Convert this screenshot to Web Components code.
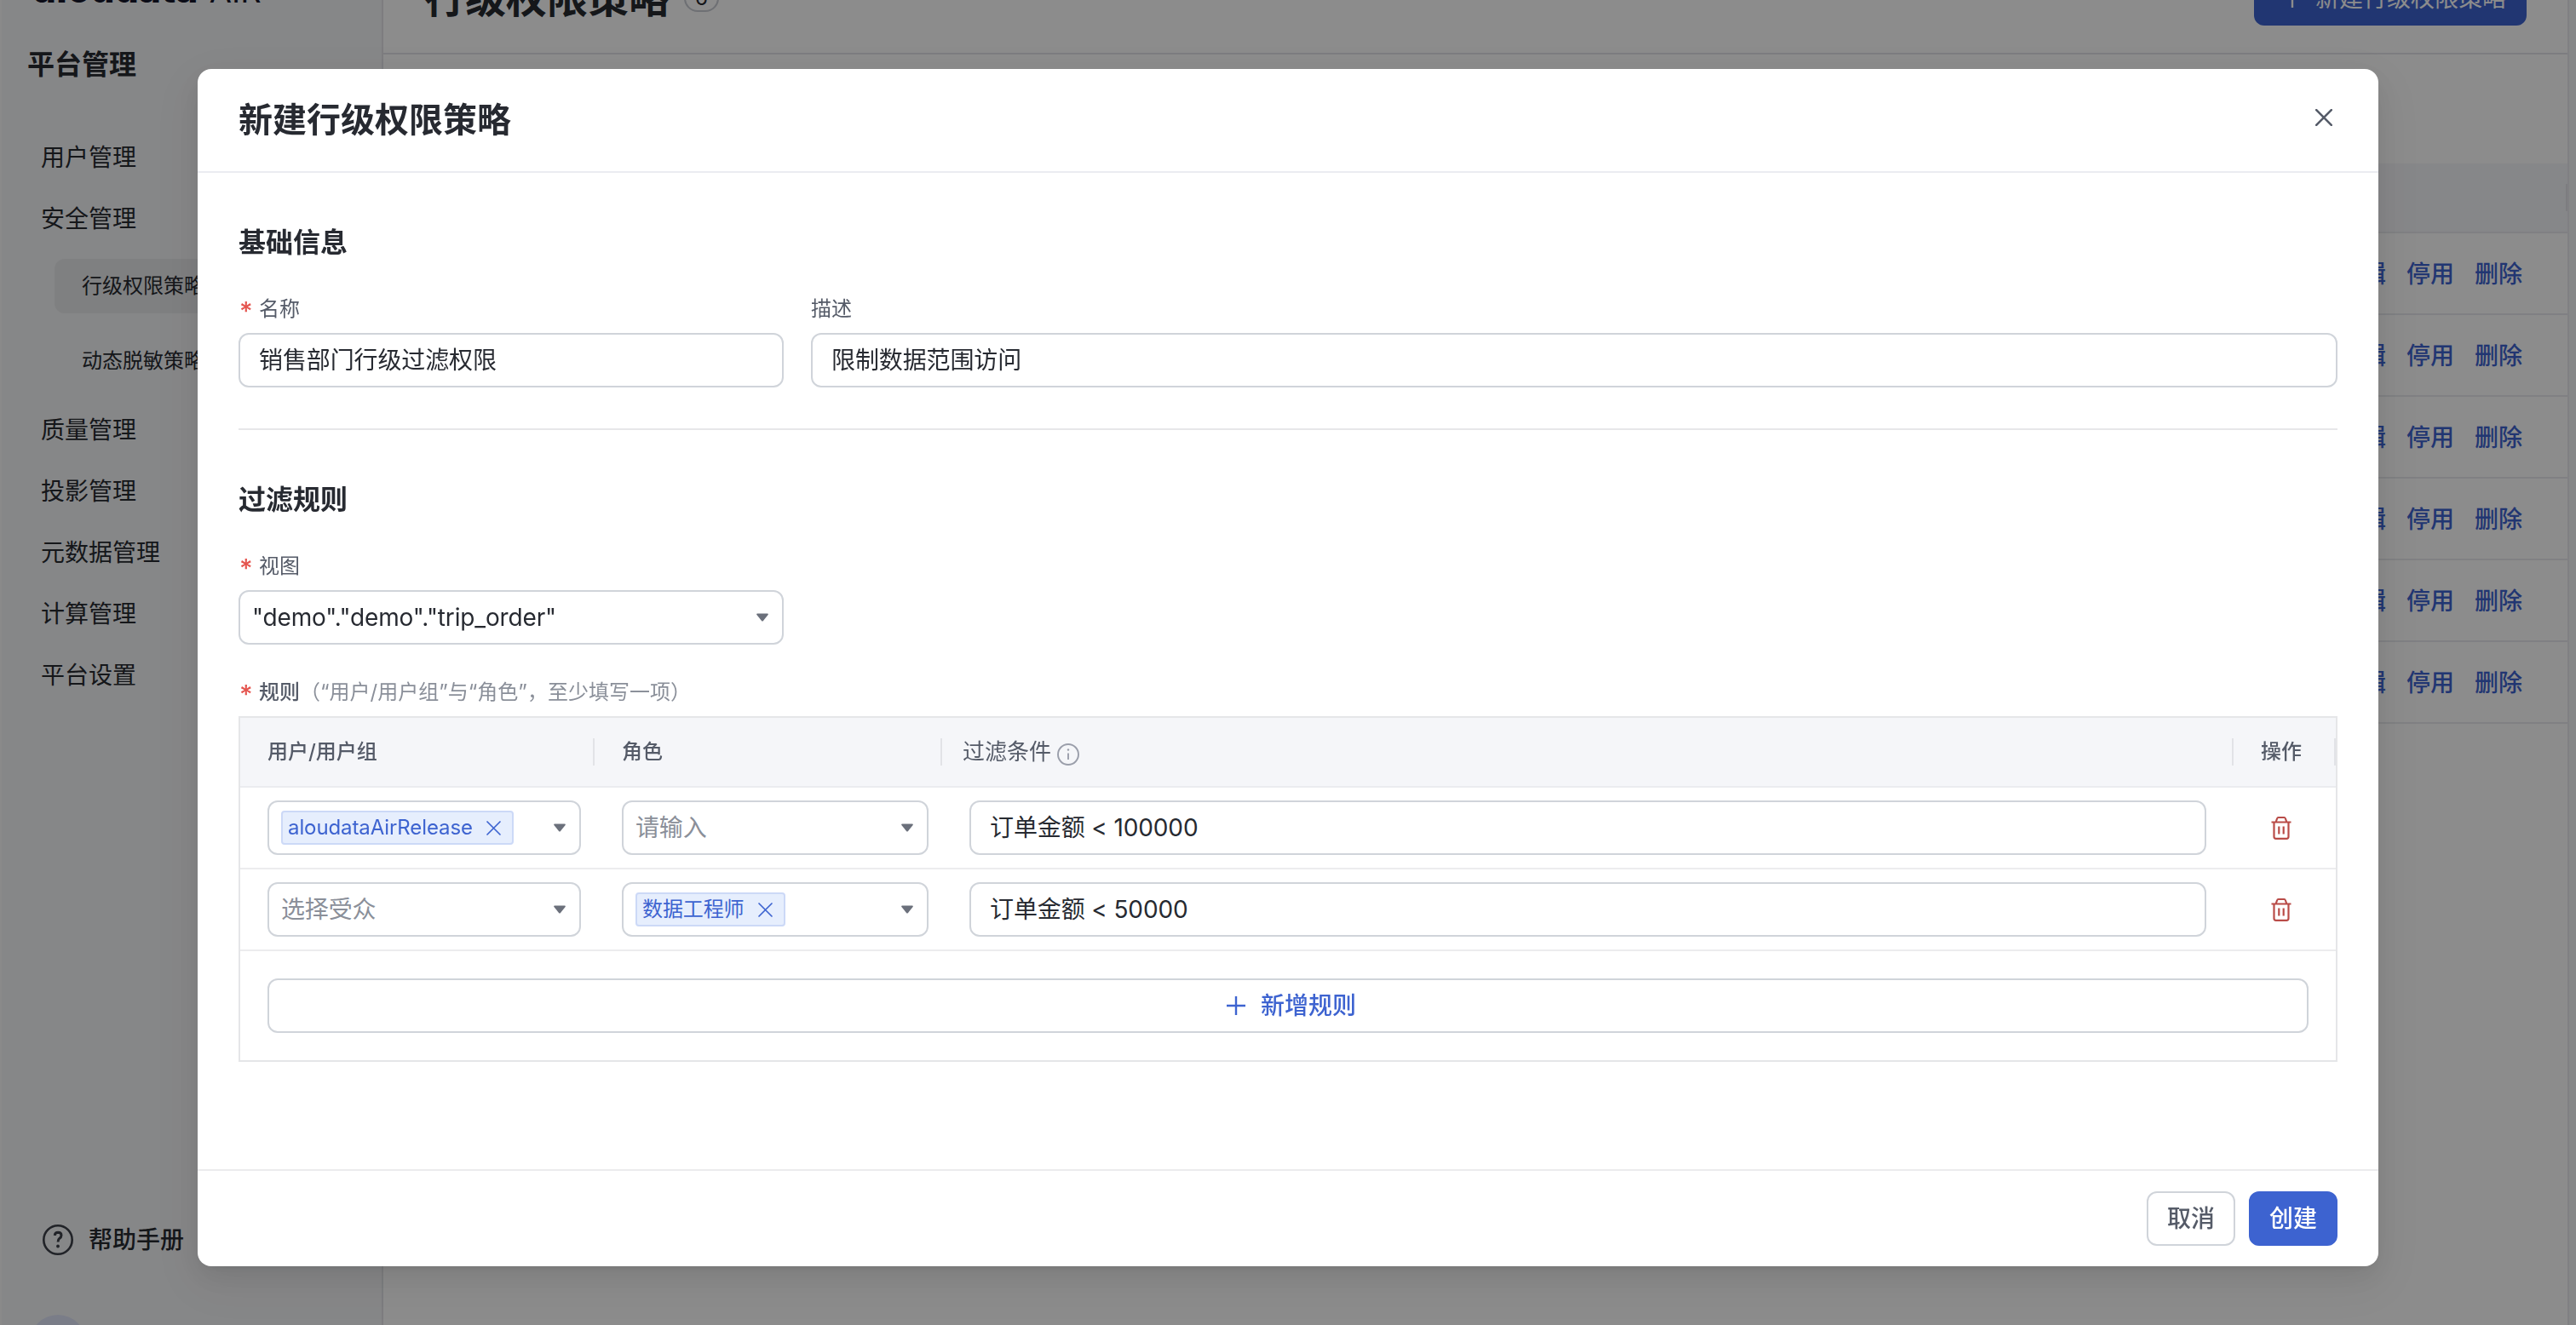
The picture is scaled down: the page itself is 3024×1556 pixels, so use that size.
<!DOCTYPE html>
<html lang="zh-CN">
<head>
<meta charset="UTF-8">
<title>行级权限策略</title>
<style>
  * { box-sizing: border-box; }
  body {
    margin: 0;
    height: 1556px;
    overflow: hidden;
    background: #f5f6f7;
    font-family: Inter, "Noto Sans CJK SC", sans-serif;
    font-size: 28px;
    line-height: 44px;
    color: #272a31;
    --primary: #3d63d0;
    --border: #d0d4da;
    --line: #e7e8eb;
    --text-2: #555b68;
    --text-3: #8a8f99;
  }
</style>
</head>
<body>
<app-shell>
  <side-bar slot="side">
    <nav-item>用户管理</nav-item>
    <nav-item>安全管理</nav-item>
    <nav-item sub active>行级权限策略</nav-item>
    <nav-item sub>动态脱敏策略</nav-item>
    <nav-item>质量管理</nav-item>
    <nav-item>投影管理</nav-item>
    <nav-item>元数据管理</nav-item>
    <nav-item>计算管理</nav-item>
    <nav-item>平台设置</nav-item>
  </side-bar>
  <page-header count="6" action="新建行级权限策略">行级权限策略</page-header>
  <policy-list rows="6"></policy-list>
</app-shell>

<modal-dialog heading="新建行级权限策略">
  <form-section heading="基础信息">
    <form-row>
      <form-field label="名称" required style="width:640px"><text-input>销售部门行级过滤权限</text-input></form-field>
      <form-field label="描述" style="flex:1"><text-input>限制数据范围访问</text-input></form-field>
    </form-row>
  </form-section>
  <form-section heading="过滤规则">
    <form-field label="视图" required style="width:640px"><select-box>"demo"."demo"."trip_order"</select-box></form-field>
    <form-field class="rules" label="规则" required strong hint="（“用户/用户组”与“角色”，至少填写一项）">
      <rule-table>
        <rule-row>
          <select-box slot="user"><tag-chip>aloudataAirRelease</tag-chip></select-box>
          <select-box slot="role" placeholder="请输入"></select-box>
          <text-input slot="cond">订单金额 &lt; 100000</text-input>
        </rule-row>
        <rule-row>
          <select-box slot="user" placeholder="选择受众"></select-box>
          <select-box slot="role"><tag-chip>数据工程师</tag-chip></select-box>
          <text-input slot="cond">订单金额 &lt; 50000</text-input>
        </rule-row>
      </rule-table>
    </form-field>
  </form-section>
  <ui-button slot="footer">取消</ui-button>
  <ui-button slot="footer" primary>创建</ui-button>
</modal-dialog>

<script>
// Iconos compartidos por los componentes
const icons = {
  close: (s, w) => `<svg width="${s}" height="${s}" viewBox="0 0 20 20" fill="none" stroke="currentColor" stroke-width="${w}" stroke-linecap="round"><path d="M1.2 1.2 18.8 18.8M18.8 1.2 1.2 18.8"/></svg>`,
  plus: `<svg width="22" height="22" viewBox="0 0 22 22" fill="none" stroke="currentColor" stroke-width="2.4"><path d="M11 0V22M0 11H22"/></svg>`,
  caret: `<svg width="16" height="10" viewBox="0 0 16 10" fill="#6b707b"><path d="M2 0.5H14Q15.6 0.7 14.6 2L9 9Q8 10 7 9L1.4 2Q0.4 0.7 2 0.5Z"/></svg>`,
  info: `<svg width="26" height="26" viewBox="0 0 26 26" fill="none" stroke="#9a9eaa" stroke-width="1.9"><circle cx="13" cy="13" r="12"/><path d="M13 11.6V19"/><circle cx="13" cy="7.5" r="1.2" fill="#9a9eaa" stroke="none"/></svg>`,
  trash: `<svg width="24" height="28" viewBox="0 0 24 28" fill="none" stroke="#b94c48" stroke-width="2.2" stroke-linejoin="round"><path d="M0.5 7.5H23.5M5.6 7.5 7.2 3Q7.5 2 8.5 2H15.5Q16.5 2 16.8 3L18.4 7.5M3.5 7.5V24.5Q3.5 26.8 5.8 26.8H18.2Q20.5 26.8 20.5 24.5V7.5M9.3 12.5V21.5M14.7 12.5V21.5"/></svg>`,
  help: `<svg width="36" height="36" viewBox="0 0 36 36" fill="none" stroke="#3c4049" stroke-width="2.6"><circle cx="18" cy="18" r="16.7"/><path d="M14.3 12.8Q14.5 9.3 18.2 9.3 22 9.4 22 12.8 22 15 19.6 16.5 18.1 17.5 18.1 20.5" stroke-width="3"/><circle cx="18" cy="25.5" r="1.9" fill="#3c4049" stroke="none"/></svg>`,
};

// Clase base: abre el shadow root y pinta el contenido de view()
class BaseElement extends HTMLElement {
  connectedCallback() {
    if (this.shadowRoot) return;
    this.attachShadow({ mode: 'open' });
    this.shadowRoot.innerHTML = '<style>*{box-sizing:border-box} svg{display:block;flex:none}</style>' + this.view();
  }
}

// Estructura de la página, desplazada un poco hacia arriba
customElements.define('app-shell', class extends BaseElement {
  view() {
    return `
      <style>
        :host { display: grid; grid-template-columns: 450px 1fr 8px; height: 1622px; margin-top: -66px; }
        main { background: #fff; border-right: 2px solid #e9eaee; min-width: 0; }
      </style>
      <slot name="side"></slot>
      <main><slot></slot></main>
      <div></div>`;
  }
});

customElements.define('side-bar', class extends BaseElement {
  view() {
    return `
      <style>
        :host { display: flex; flex-direction: column; background: #f5f6f8; border-right: 2px solid #e3e4e8; border-left: 2px solid #fbfbfc; }
        .logo { height: 106px; padding: 29px 0 0 38px; display: flex; gap: 13px; align-items: baseline; line-height: 48px; }
        .logo b { font-size: 44px; font-weight: 800; color: #15172a; letter-spacing: 0.3px; }
        .logo span { font-size: 38px; color: #15172a; }
        h2 { margin: 4px 0 40px; padding-left: 30px; font-size: 32px; line-height: 64px; font-weight: 600; }
        nav { flex: 1; }
        .help { display: flex; align-items: center; gap: 18px; height: 72px; padding-left: 48px; font-weight: 500; }
        .user { height: 64px; padding: 52px 0 0 33px; overflow: hidden; }
        .avatar { width: 66px; height: 66px; border-radius: 50%; background: #dfe4f8; }
      </style>
      <div class="logo"><b>aloudata</b><span>AIR</span></div>
      <h2>平台管理</h2>
      <nav><slot></slot></nav>
      <div class="help">${icons.help}<span>帮助手册</span></div>
      <div class="user"><div class="avatar"></div></div>`;
  }
});

customElements.define('nav-item', class extends BaseElement {
  view() {
    return `
      <style>
        :host { display: block; height: 72px; line-height: 74px; padding-left: 46px; }
        :host([sub]) { height: 64px; line-height: 64px; margin: 24px 16px 12px 62px; padding-left: 32px; font-size: 24px; border-radius: 12px; }
        :host([active]) { margin-top: 12px; background: #e8e9eb; }
      </style>
      <slot></slot>`;
  }
});

customElements.define('page-header', class extends BaseElement {
  view() {
    return `
      <style>
        :host { display: flex; align-items: center; height: 130px; padding: 0 48px 0 48px; border-bottom: 2px solid #e3e4e9; }
        h1 { margin: 0; font-size: 48px; line-height: 64px; font-weight: 600; }
        .count { width: 41px; height: 32px; margin-left: 17px; border: 2px solid #c9ccd3; border-radius: 16px; font-size: 24px; line-height: 28px; text-align: center; }
        .btn { display: flex; align-items: center; gap: 16px; height: 64px; width: 320px; margin-left: auto; padding-left: 34px; border-radius: 12px; background: var(--primary); color: #fff; }
      </style>
      <h1><slot></slot></h1>
      <span class="count">${this.getAttribute('count')}</span>
      <div class="btn">${icons.plus}<span>${this.getAttribute('action')}</span></div>`;
  }
});

// Tabla de políticas que queda detrás del diálogo
customElements.define('policy-list', class extends BaseElement {
  view() {
    const row = '<div class="row"><a>编辑</a><a>停用</a><a>删除</a></div>';
    return `
      <style>
        :host { display: block; padding-top: 128px; }
        .head { display: flex; align-items: center; justify-content: flex-end; height: 82px; background: #f5f6f9; border-bottom: 2px solid #e9eaee; }
        .head i { width: 2px; height: 32px; background: #e3e4e9; }
        .row { display: flex; justify-content: flex-end; align-items: center; gap: 24px; height: 96px; padding: 2px 53px 0 0; border-bottom: 2px solid #e9eaee; }
        a { color: var(--primary); font-weight: 500; }
      </style>
      <div class="head"><i></i></div>
      ${row.repeat(Number(this.getAttribute('rows')))}`;
  }
});

customElements.define('modal-dialog', class extends BaseElement {
  view() {
    return `
      <style>
        :host { position: fixed; inset: 0; display: flex; justify-content: center; align-items: flex-start; padding-top: 81px; background: rgba(0,0,0,.45); }
        .modal { display: flex; flex-direction: column; width: 2560px; height: 1406px; background: #fff; border-radius: 16px; box-shadow: 0 6px 12px -8px rgba(0,0,0,.12), 0 12px 32px rgba(0,0,0,.08), 0 18px 56px 16px rgba(0,0,0,.05); }
        header { display: flex; align-items: center; justify-content: space-between; height: 122px; padding: 0 54px 0 48px; border-bottom: 2px solid #ebecf1; color: #555b68; }
        h1 { margin: 0; font-size: 40px; line-height: 56px; font-weight: 600; color: #272a31; }
        .body { flex: 1; padding: 0 48px; }
        footer { display: flex; align-items: center; justify-content: flex-end; gap: 16px; height: 114px; padding: 0 48px; border-top: 2px solid #ebebed; }
        header svg { margin-bottom: 6px; }
      </style>
      <div class="modal">
        <header><h1>${this.getAttribute('heading')}</h1>${icons.close(20, 2.6)}</header>
        <div class="body"><slot></slot></div>
        <footer><slot name="footer"></slot></footer>
      </div>`;
  }
});

customElements.define('form-section', class extends BaseElement {
  view() {
    return `
      <style>
        :host { display: block; padding: 58px 0 48px; }
        :host(:first-child) { border-bottom: 2px solid #e7e7e9; }
        h2 { margin: 0 0 36px; font-size: 32px; line-height: 48px; font-weight: 600; }
      </style>
      <h2>${this.getAttribute('heading')}</h2>
      <slot></slot>`;
  }
});

customElements.define('form-row', class extends BaseElement {
  view() {
    return `<style>:host { display: flex; gap: 32px; }</style><slot></slot>`;
  }
});

customElements.define('form-field', class extends BaseElement {
  view() {
    const required = this.hasAttribute('required') ? '<i>*</i>' : '';
    const hint = this.getAttribute('hint') || '';
    return `
      <style>
        :host { display: block; }
        :host(.rules) { margin-top: 38px; }
        .label { display: flex; height: 36px; margin-bottom: 10px; font-size: 24px; line-height: 36px; color: var(--text-2); }
        b { font-weight: 400; }
        :host([strong]) b { font-weight: 500; }
        i { width: 24px; padding-left: 1px; font-style: normal; font-size: 30px; font-weight: 500; color: #e5554f; line-height: 40px; }
        span { color: var(--text-3); }
      </style>
      <div class="label">${required}<b>${this.getAttribute('label')}</b><span>${hint}</span></div>
      <slot></slot>`;
  }
});

customElements.define('text-input', class extends BaseElement {
  view() {
    return `
      <style>
        :host { display: block; height: 64px; padding-left: 22px; border: 2px solid var(--border); border-radius: 12px; line-height: 60px; letter-spacing: -0.12px; background: #fff; }
      </style>
      <slot></slot>`;
  }
});

customElements.define('select-box', class extends BaseElement {
  view() {
    return `
      <style>
        :host { display: flex; align-items: center; justify-content: space-between; height: 64px; padding: 0 15px 0 14px; border: 2px solid var(--border); border-radius: 12px; letter-spacing: -0.15px; background: #fff; }
        .ph { color: var(--text-3); }
      </style>
      <span class="ph">${this.getAttribute('placeholder') || ''}</span><slot></slot>
      ${icons.caret}`;
  }
  connectedCallback() {
    super.connectedCallback();
    // Sin placeholder, el hueco vacío no debe ocupar sitio en el flex
    if (!this.hasAttribute('placeholder')) this.shadowRoot.querySelector('.ph').remove();
  }
});

customElements.define('tag-chip', class extends BaseElement {
  view() {
    return `
      <style>
        :host { display: flex; align-items: center; gap: 16px; height: 40px; padding: 0 13px 0 6px; border: 2px solid #ccd9f7; border-radius: 4px; background: #e6eefd; color: var(--primary); font-size: 24px; line-height: 36px; letter-spacing: -0.1px; }
      </style>
      <slot></slot>${icons.close(17, 2)}`;
  }
});

// Tabla de reglas con la cabecera y el botón de añadir
customElements.define('rule-table', class extends BaseElement {
  view() {
    return `
      <style>
        :host { display: block; border: 2px solid #e5e6e8; }
        .head { display: flex; align-items: center; height: 82px; background: #f5f6f9; border-bottom: 2px solid #ebecf0; font-size: 24px; font-weight: 500; color: var(--text-2); }
        .head > div { display: flex; align-items: center; height: 32px; border-right: 2px solid #e2e3e7; }
        .head > div { line-height: 34px; }
        .user { width: 416px; padding-left: 32px; }
        .role { width: 408px; padding-left: 32px; }
        .cond { flex: 1; gap: 7px; padding-left: 24px; font-size: 26px; font-weight: 400; }
        .cond svg { margin-top: 5px; }
        .op { width: 120px; padding-left: 32px; }
        .foot { padding: 32px; }
        .add { display: flex; align-items: center; justify-content: center; gap: 18px; height: 64px; padding-left: 8px; border: 2px solid var(--border); border-radius: 12px; color: var(--primary); font-weight: 500; }
      </style>
      <div class="head">
        <div class="user">用户/用户组</div>
        <div class="role">角色</div>
        <div class="cond"><span>过滤条件</span>${icons.info}</div>
        <div class="op">操作</div>
      </div>
      <slot></slot>
      <div class="foot"><div class="add">${icons.plus}<span>新增规则</span></div></div>`;
  }
});

customElements.define('rule-row', class extends BaseElement {
  view() {
    return `
      <style>
        :host { display: grid; grid-template-columns: 368px 360px 1fr 88px; column-gap: 48px; align-items: center; height: 96px; padding: 0 16px 0 32px; border-bottom: 2px solid #ececee; }
        .del { padding-left: 28px; }
      </style>
      <slot name="user"></slot>
      <slot name="role"></slot>
      <slot name="cond"></slot>
      <div class="del">${icons.trash}</div>`;
  }
});

customElements.define('ui-button', class extends BaseElement {
  view() {
    return `
      <style>
        :host { display: block; width: 104px; height: 64px; border: 2px solid var(--border); border-radius: 12px; line-height: 61px; text-align: center; color: var(--text-2); font-weight: 500; }
        :host([primary]) { border-color: var(--primary); background: var(--primary); color: #fff; }
      </style>
      <slot></slot>`;
  }
});
</script>
</body>
</html>
